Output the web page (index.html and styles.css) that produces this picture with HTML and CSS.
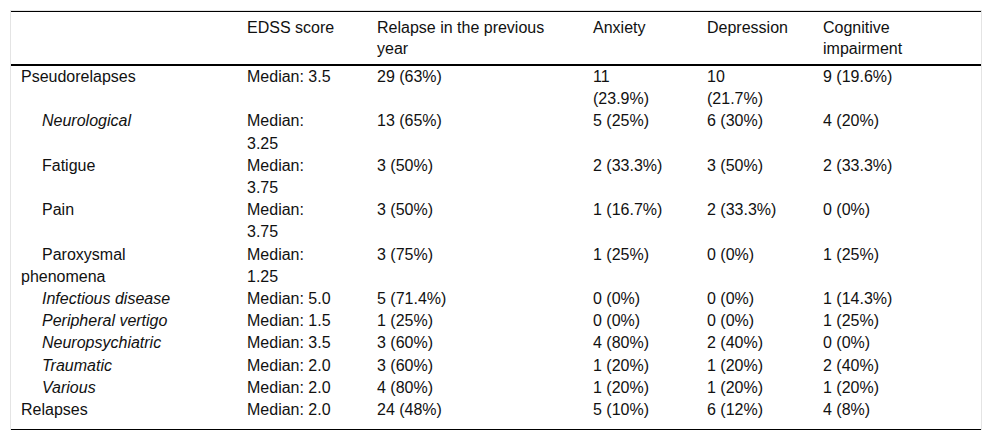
FILE: index.html
```html
<!DOCTYPE html>
<html lang="en">
<head>
<meta charset="utf-8">
<title>Pseudorelapses table</title>
<link rel="stylesheet" href="styles.css">
</head>
<body>
<div class="table-wrap">
  <table class="data-table">
    <colgroup>
      <col class="c1"><col class="c2"><col class="c3"><col class="c4"><col class="c5"><col class="c6">
    </colgroup>
    <thead>
      <tr>
        <th></th>
        <th>EDSS score</th>
        <th>Relapse in the previous year</th>
        <th>Anxiety</th>
        <th>Depression</th>
        <th>Cognitive impairment</th>
      </tr>
    </thead>
    <tbody>
      <tr><td>Pseudorelapses</td><td>Median: 3.5</td><td>29 (63%)</td><td>11 (23.9%)</td><td>10 (21.7%)</td><td>9 (19.6%)</td></tr>
      <tr><td class="sub it">Neurological</td><td>Median: 3.25</td><td>13 (65%)</td><td>5 (25%)</td><td>6 (30%)</td><td>4 (20%)</td></tr>
      <tr><td class="sub">Fatigue</td><td>Median: 3.75</td><td>3 (50%)</td><td>2 (33.3%)</td><td>3 (50%)</td><td>2 (33.3%)</td></tr>
      <tr><td class="sub">Pain</td><td>Median: 3.75</td><td>3 (50%)</td><td>1 (16.7%)</td><td>2 (33.3%)</td><td>0 (0%)</td></tr>
      <tr><td class="sub">Paroxysmal phenomena</td><td>Median: 1.25</td><td>3 (75%)</td><td>1 (25%)</td><td>0 (0%)</td><td>1 (25%)</td></tr>
      <tr><td class="sub it">Infectious disease</td><td>Median: 5.0</td><td>5 (71.4%)</td><td>0 (0%)</td><td>0 (0%)</td><td>1 (14.3%)</td></tr>
      <tr><td class="sub it">Peripheral vertigo</td><td>Median: 1.5</td><td>1 (25%)</td><td>0 (0%)</td><td>0 (0%)</td><td>1 (25%)</td></tr>
      <tr><td class="sub it">Neuropsychiatric</td><td>Median: 3.5</td><td>3 (60%)</td><td>4 (80%)</td><td>2 (40%)</td><td>0 (0%)</td></tr>
      <tr><td class="sub it">Traumatic</td><td>Median: 2.0</td><td>3 (60%)</td><td>1 (20%)</td><td>1 (20%)</td><td>2 (40%)</td></tr>
      <tr><td class="sub it">Various</td><td>Median: 2.0</td><td>4 (80%)</td><td>1 (20%)</td><td>1 (20%)</td><td>1 (20%)</td></tr>
      <tr class="last"><td>Relapses</td><td>Median: 2.0</td><td>24 (48%)</td><td>5 (10%)</td><td>6 (12%)</td><td>4 (8%)</td></tr>
    </tbody>
  </table>
</div>
</body>
</html>
```
FILE: styles.css
```css
html, body {
  margin: 0;
  padding: 0;
  background: #fff;
}

body {
  font-family: "Liberation Sans", Arial, sans-serif;
  font-size: 16px;
  color: #111;
}

.table-wrap {
  margin: 10px 10px 0 10px;
  border: 1px solid #e4e4e4;
  border-bottom: none;
}

.data-table {
  width: 970px;
  table-layout: fixed;
  border-collapse: collapse;
  border-top: 1px solid #000;
  border-bottom: 1px solid #000;
}

.c1 { width: 226px; }
.c2 { width: 130px; }
.c3 { width: 216px; }
.c4 { width: 114px; }
.c5 { width: 116px; }
.c6 { width: 168px; }

.data-table th,
.data-table td {
  text-align: left;
  vertical-align: top;
  line-height: 22.2px;
  font-weight: normal;
  padding: 0 30px 0 10px;
}

.data-table th {
  line-height: 21px;
  padding-top: 5px;
  padding-bottom: 5px;
  border-bottom: 2px solid #000;
}

.data-table tr.last td {
  padding-bottom: 8px;
}

.data-table td.sub {
  text-indent: 21px;
}

.data-table td.it {
  font-style: italic;
}
```
